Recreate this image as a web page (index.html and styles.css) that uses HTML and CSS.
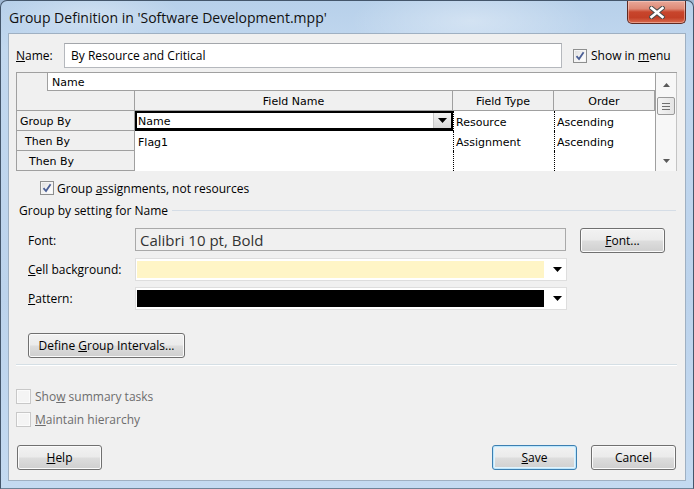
FILE: index.html
```html
<!DOCTYPE html>
<html>
<head>
<meta charset="utf-8">
<link rel="stylesheet" href="styles.css">
</head>
<body>
<div class="window">
  <div class="titlebar">
    <span class="title">Group Definition in 'Software Development.mpp'</span>
    <div class="close">
      <svg width="16" height="13" viewBox="0 0 16 13">
        <path d="M2.5 2 L13.5 11 M13.5 2 L2.5 11" stroke="#4a4a4a" stroke-width="4.6" stroke-linecap="square" fill="none"/>
        <path d="M2.5 2 L13.5 11 M13.5 2 L2.5 11" stroke="#ffffff" stroke-width="2.6" stroke-linecap="square" fill="none"/>
      </svg>
    </div>
  </div>
  <div class="panel">
    <div class="name-row">
      <span class="name-label"><u>N</u>ame:</span>
      <div class="textbox"><span>By Resource and Critical</span></div>
      <span class="chk checked"><svg width="10" height="10" viewBox="0 0 10 10"><path d="M1.5 5.2 L4 8 L8.6 1.2" stroke="#4b5f96" stroke-width="1.8" fill="none"/></svg></span>
      <span class="chk-text">Show in <u>m</u>enu</span>
    </div>

    <div class="grid">
      <div class="g-blank"></div>
      <div class="g-namecell"><span>Name</span></div>
      <div class="g-corner"></div>
      <div class="g-head"><span>Field Name</span></div>
      <div class="g-head"><span>Field Type</span></div>
      <div class="g-head"><span>Order</span></div>

      <div class="g-rowhead lv1"><span>Group By</span></div>
      <div class="g-edit"><span>Name</span><span class="g-drop"><svg width="9" height="5" viewBox="0 0 9 5"><path d="M0 0 H9 L4.5 5 Z" fill="#000"/></svg></span></div>
      <div class="g-cell dotted"><span>Resource</span></div>
      <div class="g-cell dotted"><span>Ascending</span></div>

      <div class="g-rowhead lv2"><span>Then By</span></div>
      <div class="g-cell"><span>Flag1</span></div>
      <div class="g-cell dotted"><span>Assignment</span></div>
      <div class="g-cell dotted"><span>Ascending</span></div>

      <div class="g-rowhead lv3"><span>Then By</span></div>
      <div class="g-cell"></div>
      <div class="g-cell dotted"></div>
      <div class="g-cell dotted"></div>

      <div class="g-scroll">
        <svg class="arrow-up" width="7" height="4" viewBox="0 0 7 4"><path d="M0 4 L3.5 0 L7 4 Z" fill="#5a5a5a"/></svg>
        <div class="thumb"><i></i><i></i><i></i></div>
        <svg class="arrow-down" width="7" height="4" viewBox="0 0 7 4"><path d="M0 0 L3.5 4 L7 0 Z" fill="#5a5a5a"/></svg>
      </div>
    </div>

    <div class="assign-row">
      <span class="chk checked"><svg width="10" height="10" viewBox="0 0 10 10"><path d="M1.5 5.2 L4 8 L8.6 1.2" stroke="#4b5f96" stroke-width="1.8" fill="none"/></svg></span>
      <span class="chk-text">Group <u>a</u>ssignments, not resources</span>
    </div>

    <div class="group-heading"><span>Group by setting for Name</span></div>

    <div class="set-row">
      <span class="set-label">Font:</span>
      <div class="fontbox"><span>Calibri 10 pt, Bold</span></div>
      <div class="btn font-btn"><span><u>F</u>ont...</span></div>
    </div>
    <div class="set-row short">
      <span class="set-label"><u>C</u>ell background:</span>
      <div class="combo"><div class="swatch yellow"></div><svg width="9" height="5" viewBox="0 0 9 5"><path d="M0 0 H9 L4.5 5 Z" fill="#000"/></svg></div>
    </div>
    <div class="set-row short pattern">
      <span class="set-label"><u>P</u>attern:</span>
      <div class="combo"><div class="swatch black"></div><svg width="9" height="5" viewBox="0 0 9 5"><path d="M0 0 H9 L4.5 5 Z" fill="#000"/></svg></div>
    </div>

    <div class="btn define-btn"><span>Define <u>G</u>roup Intervals...</span></div>

    <div class="separator"></div>

    <div class="dis-row first">
      <span class="chk disabled"></span>
      <span class="dis-text">Sho<u>w</u> summary tasks</span>
    </div>
    <div class="dis-row">
      <span class="chk disabled"></span>
      <span class="dis-text"><u>M</u>aintain hierarchy</span>
    </div>

    <div class="bottom-row">
      <div class="btn help-btn"><span><u>H</u>elp</span></div>
      <div class="spacer"></div>
      <div class="btn save-btn"><span><u>S</u>ave</span></div>
      <div class="btn cancel-btn"><span>Cancel</span></div>
    </div>
  </div>
</div>
</body>
</html>
```

FILE: styles.css
```css
* { box-sizing: border-box; }
html, body { margin: 0; padding: 0; }
body {
  width: 694px; height: 489px; overflow: hidden;
  font-family: "Segoe UI", "Open Sans", "Noto Sans", sans-serif;
  font-size: 12px; color: #000; background: #9fb8d4;
}
u { text-decoration: underline; text-underline-offset: 1px; }

.window {
  width: 694px; height: 489px;
  display: flex; flex-direction: column;
  border: 1px solid #44566b;
  border-bottom-color: #6f8398;
  border-radius: 7px 7px 0 0;
  padding: 0 7px 7px 7px;
  background:
    radial-gradient(ellipse 120px 40px at 470px 20px, rgba(255,255,255,0.35), transparent),
    radial-gradient(ellipse 90px 30px at 90px 14px, rgba(255,255,255,0.3), transparent),
    linear-gradient(180deg, #b7d0ea 0%, #c2d8ef 10%, #bcd3ec 60%, #c4daf1 100%);
}

.titlebar {
  height: 32px; flex: none;
  display: flex; align-items: flex-start;
}
.title {
  margin-top: 7px; padding-left: 1px;
  font-size: 14px; color: #111;
  white-space: nowrap;
}
.close {
  margin-left: auto;
  width: 59px; height: 23px;
  border: 1px solid #5f2a22; border-top: none;
  border-radius: 0 0 5px 5px;
  background: linear-gradient(180deg, #e9a899 0%, #de8a77 35%, #c8452c 50%, #c33f26 75%, #d86a4e 100%);
  box-shadow: inset 0 0 0 1px rgba(255,220,210,0.45);
  display: flex; align-items: center; justify-content: center;
}

.panel {
  flex: 1;
  background: #f0f0f0;
  border: 1px solid #9fb0c2;
  padding: 0 8px 0 7px;
  display: flex; flex-direction: column;
}

/* Name row */
.name-row { margin-top: 9px; height: 25px; display: flex; align-items: center; }
.name-label { width: 48px; }
.textbox {
  width: 498px; height: 25px;
  background: #fff;
  border: 1px solid #b5b8bd; border-top-color: #a3a6ab;
  padding-left: 6px;
  display: flex; align-items: center;
}
.name-row .chk { margin-left: 11px; }
.chk-text { margin-left: 4px; white-space: nowrap; }

.chk {
  width: 14px; height: 14px; flex: none;
  border: 1px solid #8e8f8f;
  background: linear-gradient(135deg, #dcdcdc 0%, #f6f6f6 60%, #ffffff 100%);
  box-shadow: inset 0 0 0 1px #f4f4f4;
  display: inline-flex; align-items: center; justify-content: center;
}
.chk.disabled {
  width: 15px; height: 15px;
  border-color: #c8c8c8;
  background: #f4f4f4;
  box-shadow: inset 0 0 0 1px #fbfbfb;
}

/* Grid */
.grid {
  margin-top: 4px;
  width: 661px;
  display: grid;
  grid-template-columns: 30px 88px 318px 101px 101px 22px;
  grid-template-rows: 18px 20px 20px 20px 20px;
  border-top: 1px solid #a0a0a0;
  border-left: 1px solid #a0a0a0;
  background: #f0f0f0;
  font-family: "DejaVu Sans", "Open Sans", sans-serif;
  font-size: 11px;
}
.grid > div { display: flex; align-items: center; white-space: nowrap; padding-top: 2px; }
.g-blank { grid-column: 1; grid-row: 1; }
.g-namecell {
  grid-column: 2 / 6; grid-row: 1;
  background: #fff;
  border-left: 1px solid #a0a0a0;
  border-bottom: 1px solid #a0a0a0;
  padding-left: 4px;
}
.g-corner { grid-column: 1 / 3; grid-row: 2; border-right: 1px solid #a0a0a0; border-bottom: 1px solid #a0a0a0; }
.g-head {
  justify-content: center;
  border-right: 1px solid #a0a0a0;
  border-bottom: 1px solid #a0a0a0;
}
.g-rowhead {
  grid-column: 1 / 3;
  border-right: 1px solid #a0a0a0;
  border-bottom: 1px solid #a0a0a0;
}
.lv1 { padding-left: 3px; }
.lv2 { padding-left: 8px; }
.lv3 { padding-left: 12px; }
.g-cell { background: #fff; padding-left: 3px; }
.g-cell.dotted { border-left: 1px dotted #000; padding-left: 2px; }
.grid > .g-edit {
  background: #fff;
  border: 2px solid #000; border-bottom-width: 3px;
  padding: 0 0 0 1px;
  justify-content: space-between;
}
.g-edit > span:first-child { padding-top: 2px; }
.g-drop {
  width: 18px; height: 15px;
  background: linear-gradient(180deg, #f2f2f2, #d8d8d8);
  border-left: 1px solid #c8c8c8;
  display: flex; align-items: center; justify-content: center;
}
.grid > .g-scroll {
  grid-column: 6; grid-row: 1 / 6;
  background: #f7f7f7;
  border-left: 1px solid #a0a0a0;
  border-right: 1px solid #c4c4c4;
  padding-top: 0;
  flex-direction: column; justify-content: flex-start;
  align-items: center;
}
.arrow-up { margin-top: 10px; }
.thumb {
  margin-top: 10px;
  width: 18px; height: 18px;
  border: 1px solid #9a9a9a; border-radius: 2px;
  background: linear-gradient(90deg, #f4f4f4, #e4e4e4);
  display: flex; flex-direction: column; align-items: center; justify-content: center; gap: 2px;
}
.thumb i { display: block; width: 8px; height: 1px; background: #6f6f6f; }
.arrow-down { margin-top: 44px; }

/* assignments checkbox */
.assign-row { margin-top: 10px; height: 14px; display: flex; align-items: center; padding-left: 24px; }
.assign-row .chk-text { margin-left: 3px; }

.group-heading { margin-top: 8px; height: 15px; display: flex; align-items: center; padding-left: 3px; }
.group-heading::after { content: ""; flex: 1; height: 1px; background: #d5dde6; margin-left: 4px; margin-right: 1px; }

.set-row { margin-top: 10px; height: 25px; display: flex; align-items: center; padding-left: 12px; }
.set-row.short { margin-top: 5px; height: 23px; }
.set-row.pattern { margin-top: 6px; }
.set-label { width: 107px; white-space: nowrap; }
.fontbox {
  width: 431px; height: 23px; align-self: flex-start;
  border: 1px solid #a9a9a9;
  background: #f0f0f0;
  font-size: 15px; color: #333;
  padding-left: 4px;
  display: flex; align-items: center;
}
.font-btn { margin-left: 14px; width: 85px; }
.combo {
  width: 432px; height: 23px;
  background: #fff;
  border: 1px solid #dedede;
  display: flex; align-items: center;
  padding: 2px 0 2px 1px;
}
.swatch { width: 407px; height: 17px; }
.swatch.yellow { background: #fff5c6; }
.swatch.black { background: #000; }
.combo svg { margin-left: 9px; }

.btn {
  height: 25px;
  border: 1px solid #707070; border-radius: 3px;
  background: linear-gradient(180deg, #f2f2f2 0%, #ebebeb 48%, #dddddd 52%, #cfcfcf 100%);
  box-shadow: inset 0 0 0 1px #fbfbfb;
  display: flex; align-items: center; justify-content: center;
  white-space: nowrap;
}
.define-btn { margin-top: 23px; margin-left: 12px; width: 157px; }

.separator { margin-top: 6px; height: 2px; border-top: 1px solid #d5dfe5; border-bottom: 1px solid #ffffff; }

.dis-row { margin-top: 8px; height: 15px; display: flex; align-items: center; }
.dis-row.first { margin-top: 23px; }
.dis-text { margin-left: 4px; color: #6d6d6d; white-space: nowrap; }

.bottom-row { margin-top: 18px; height: 25px; display: flex; padding-right: 1px; }
.help-btn { margin-left: 1px; width: 85px; }
.spacer { flex: 1; }
.save-btn {
  width: 85px;
  border-color: #3c7fb1;
  box-shadow: inset 0 0 0 1px #bfe6fb, inset 0 0 0 2px #e2f3fc;
}
.cancel-btn { margin-left: 14px; width: 85px; }
```
